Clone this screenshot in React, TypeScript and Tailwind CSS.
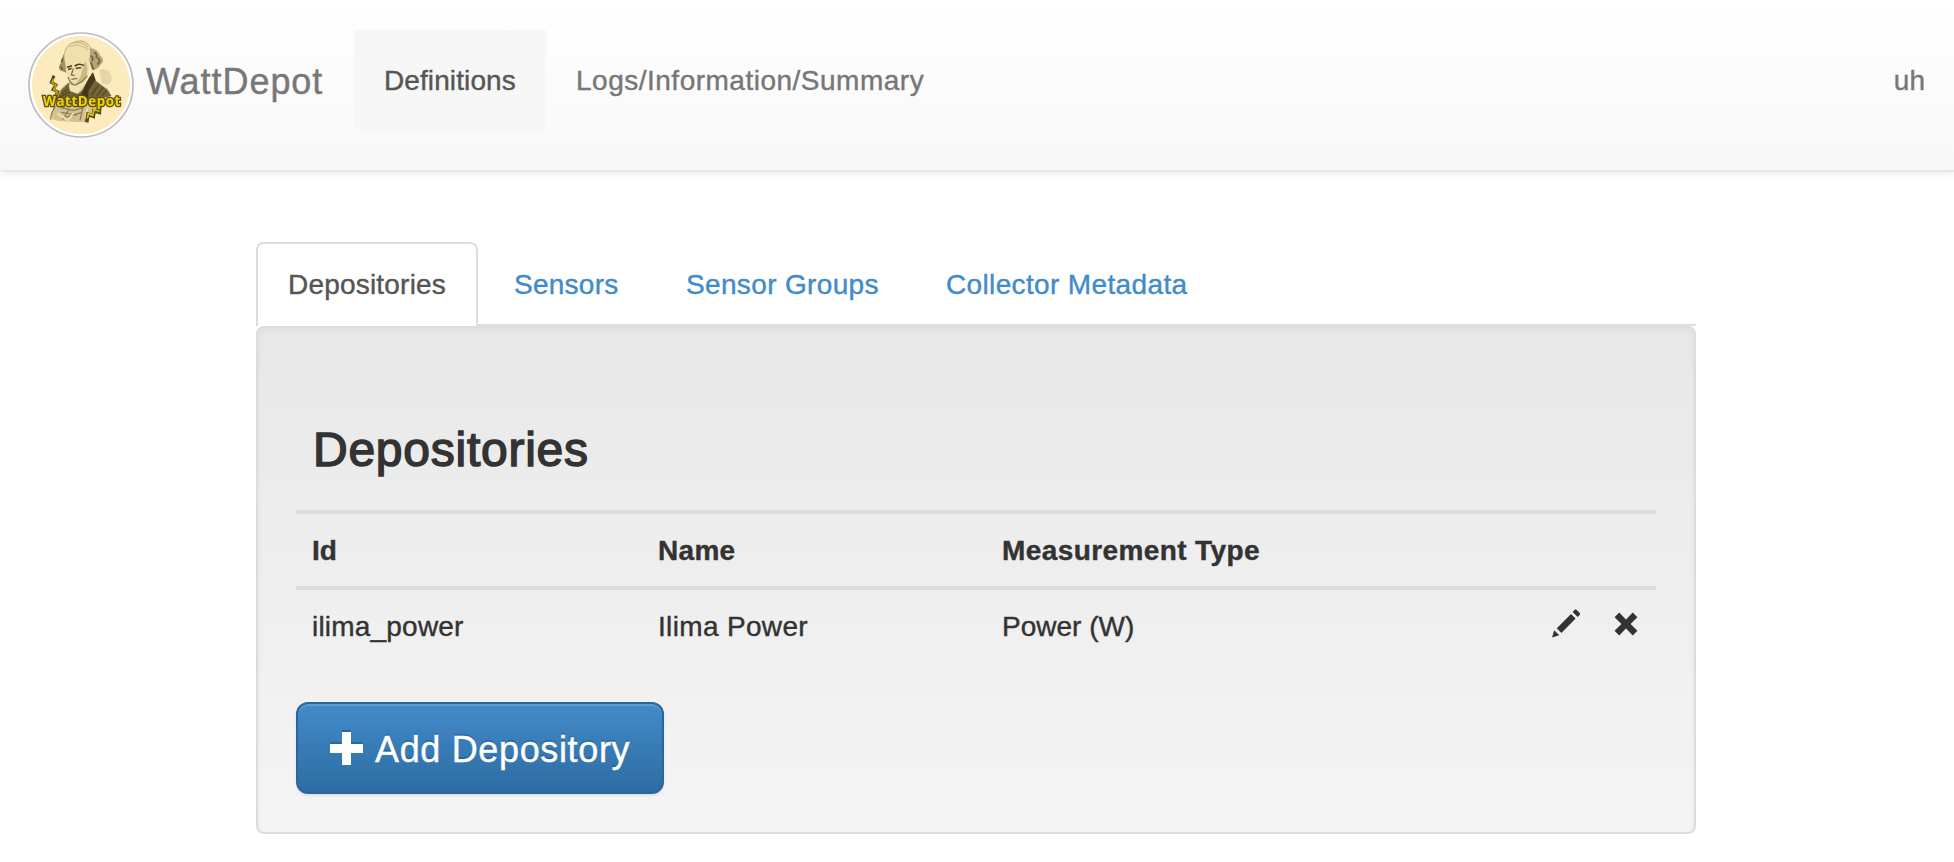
import React from "react";

const tabs = [
  { label: "Sensors", tracking: "w-[168px] tracking-[0.26px]" },
  { label: "Sensor Groups", tracking: "w-[256px] tracking-[0.35px]" },
  { label: "Collector Metadata", tracking: "tracking-[0.36px]" },
];

const headers = [
  { label: "Id", tracking: "" },
  { label: "Name", tracking: "tracking-[0.3px]" },
  { label: "Measurement Type", tracking: "tracking-[0.4px]" },
  { label: "", tracking: "" },
];

function Logo() {
  return (
    <svg viewBox="24 21 318 318" className="size-[106px] shrink-0">
      <defs>
        <filter id="soft" x="-10%" y="-10%" width="120%" height="120%">
          <feGaussianBlur stdDeviation="1.7" />
        </filter>
        <filter id="edge" x="-10%" y="-10%" width="120%" height="120%">
          <feGaussianBlur stdDeviation="1.1" />
        </filter>
      </defs>
      <circle cx="183" cy="180" r="156" fill="#fff" stroke="#bcbcc0" strokeWidth="5" />
      <circle cx="183" cy="180" r="147" fill="#fdebbd" />
      <g filter="url(#soft)">
        <path d="M238 134C258 126 278 144 275 165C271 180 258 182 244 174Z" fill="#e6d6a6" />
        <path d="M146 170L128 186L112 204L104 232L96 262L94 282L118 288L150 290L200 292L226 260L262 224L274 212L264 192L232 172L212 156L190 184L160 184Z" fill="#d2c292" />
        <path d="M146 174L126 192L110 220L170 232L262 216L274 212L262 194L228 168L220 144L206 160L190 194L174 206Z" fill="#75643b" />
        <path d="M206 196L226 164L218 142L200 172L186 200L178 222L204 226Z" fill="#43371a" />
        <path d="M146 178L150 198L172 206L196 176L206 150L190 162L170 184Z" fill="#f2e2b2" />
        <path d="M134 84C124 94 128 108 121 116C114 126 116 136 126 138L140 144C134 120 138 100 134 84Z" fill="#a18f63" />
        <path d="M206 70C220 68 238 78 240 92C252 98 252 112 242 118C238 128 228 134 218 136C210 130 214 120 208 110C200 98 202 84 206 70Z" fill="#b6a478" />
        <path d="M134 84C138 58 160 46 186 48C204 52 212 66 210 88C210 98 206 108 208 118C208 134 206 146 200 156C192 166 182 176 170 180C156 182 148 170 144 156C138 144 140 132 137 118C132 106 132 94 134 84Z" fill="#f1dfae" />
        <path d="M134 84C138 60 160 47 186 48C200 51 210 62 214 72" fill="none" stroke="#b8a678" strokeWidth="3" />
        <path d="M160 54C178 50 194 56 204 68M148 66C166 56 188 60 204 76" fill="none" stroke="#d5c493" strokeWidth="4" />
        <path d="M196 108C203 120 204 134 200 150C192 166 178 178 166 179C176 164 186 150 186 134Z" fill="#cbb987" />
        <path d="M141 127L156 122M164 123C172 117 184 117 192 122" stroke="#4c3f1d" strokeWidth="5" fill="none" />
        <path d="M144 133L155 130M167 130L184 128" stroke="#6a5b33" strokeWidth="5" fill="none" />
        <path d="M160 130L154 150L164 152M154 163L172 160" stroke="#82714a" strokeWidth="4" fill="none" />
        <path d="M144 156Q152 180 166 180L186 170L202 152" stroke="#8a794e" strokeWidth="4" fill="none" />
        <path d="M222 82Q234 88 228 98M232 98Q246 108 232 118M212 92Q222 98 216 108M128 100L124 112M122 124L128 134M212 112L218 126L222 134" stroke="#6b5b34" strokeWidth="4.5" fill="none" />
        <path d="M106 244Q92 264 92 284M122 248L160 256L192 248M124 262L170 270M134 278L186 262M188 250L180 286M148 252L128 284" stroke="#8c7b50" strokeWidth="3.5" fill="none" />
        <path d="M112 266L142 284M160 264L144 288M202 250L196 282" stroke="#f0dfad" strokeWidth="6" fill="none" />
        <path d="M126 206L144 192M120 216L150 200M214 210L236 180M230 212L250 188M246 212L260 196" stroke="#57481f" strokeWidth="4" fill="none" />
      </g>
      <g filter="url(#edge)">
        <path d="M102 152L94 172L108 180L99 194L113 200L106 216L112 226" fill="none" stroke="#5a4c1c" strokeWidth="9" />
        <path d="M100 162L96 173L108 181L101 194L112 200L108 214" fill="none" stroke="#cba700" strokeWidth="4.5" />
        <path d="M239 244L238 262L222 258L220 274L204 268L200 292" fill="none" stroke="#5a4c1c" strokeWidth="11" />
        <path d="M238 242L236 258L222 254L218 271L205 266L202 280" fill="none" stroke="#e6c500" strokeWidth="5" />
        <text
          x="69"
          y="242"
          textLength="232"
          lengthAdjust="spacing"
          className="font-['Open_Sans'] text-[40px] font-bold"
          fill="#f1d500"
          stroke="#5e5018"
          strokeWidth="8"
          paintOrder="stroke"
        >
          WattDepot
        </text>
      </g>
    </svg>
  );
}

function Pencil() {
  return (
    <svg viewBox="0 0 28 29" className="h-[29px] w-7" fill="#333">
      <path d="M0 28.5L2.2 21.2L7.3 26.3ZM4.8 19.3L19 5L23.6 9.6L9.4 23.9ZM20.6 2.9L22.8 .7Q23.6 0 24.4 .7L28 4.3Q28.6 5 27.9 5.7L25.7 7.9Z" />
    </svg>
  );
}

function Remove() {
  return (
    <svg viewBox="0 0 28 28" className="size-7" fill="#333">
      <path d="M7.2 2.6L14 9.4L20.8 2.6L25.4 7.2L18.6 14L25.4 20.8L20.8 25.4L14 18.6L7.2 25.4L2.6 20.8L9.4 14L2.6 7.2Z" />
    </svg>
  );
}

export default function App() {
  return (
    <div className="h-[862px] overflow-hidden bg-white font-['Liberation_Sans',Arial,sans-serif] text-[28px] leading-10 text-[#333] [-webkit-text-stroke:0.4px]">
      <nav className="flex h-[172px] items-start rounded-bl-[3px] border-b-2 border-[#e7e7e7] bg-linear-to-b from-white to-[#f8f8f8] pr-[29px] text-[#777] shadow-[inset_0_2px_0_rgba(255,255,255,0.15),0_2px_10px_rgba(0,0,0,0.075)]">
        <a className="flex w-[354px] shrink-0 items-start pl-7 pt-8 [-webkit-text-stroke:0]">
          <Logo />
          <span className="ml-3 mt-[30px] text-[36px] tracking-[0.95px] [-webkit-text-stroke:0.4px]">WattDepot</span>
        </a>
        <a className="mt-[30px] w-48 px-[30px] pb-[29px] pt-[31px] tracking-[0.1px] bg-[#f7f7f7] text-[#555]">
          Definitions
        </a>
        <a className="mt-[30px] px-[30px] pt-[31px] tracking-[0.5px]">Logs/Information/Summary</a>
        <a className="ml-auto mt-[61px]">uh</a>
      </nav>

      <main className="ml-64 mt-[70px] w-[1440px]">
        <div className="flex h-[84px] gap-1 border-b-2 border-[#ddd]">
          <a className="h-[84px] w-[222px] rounded-t-lg border-2 border-b-0 border-[#ddd] bg-white px-[30px] pt-[21px] tracking-[0.2px] text-[#555]">
            Depositories
          </a>
          {tabs.map((tab) => (
            <a key={tab.label} className={`whitespace-nowrap pl-8 pt-[23px] text-[#428bca] ${tab.tracking}`}>
              {tab.label}
            </a>
          ))}
        </div>

        <section className="h-[508px] rounded-lg border-2 border-[#dcdcdc] bg-linear-to-b from-[#e8e8e8] to-[#f5f5f5] px-[38px] shadow-[inset_0_2px_6px_rgba(0,0,0,0.05),0_2px_0_rgba(255,255,255,0.1)]">
          <h3 className="ml-[17px] pt-[95px] text-[48px] leading-[53px] tracking-[0.75px] [-webkit-text-stroke:1.5px_#333]">
            Depositories
          </h3>
          <table className="mt-[34px] w-full table-fixed border-separate border-spacing-0 text-left">
            <colgroup>
              <col className="w-[346px]" />
              <col className="w-[344px]" />
              <col className="w-[345px]" />
              <col />
            </colgroup>
            <thead>
              <tr>
                {headers.map((h) => (
                  <th
                    key={h.label}
                    className={`h-20 border-y-4 border-[#ddd] px-4 pb-[15px] pt-[17px] font-bold ${h.tracking}`}
                  >
                    {h.label}
                  </th>
                ))}
              </tr>
            </thead>
            <tbody>
              <tr>
                <td className="px-4 pb-[15px] pt-[17px] tracking-[0.2px]">ilima_power</td>
                <td className="px-4 pb-[15px] pt-[17px] tracking-[0.34px]">Ilima Power</td>
                <td className="px-4 pb-[15px] pt-[17px]">Power (W)</td>
                <td className="p-4">
                  <div className="flex h-10 items-start justify-end gap-8 pt-[3px]">
                    <Pencil />
                    <div className="pt-px">
                      <Remove />
                    </div>
                  </div>
                </td>
              </tr>
            </tbody>
          </table>
          <button className="mt-10 flex h-[92px] w-[368px] items-center rounded-xl border-2 border-[#2b669a] bg-linear-to-b from-[#428bca] to-[#2d6ca2] pl-8 text-[36px] text-white shadow-[inset_0_2px_0_rgba(255,255,255,0.15),0_2px_2px_rgba(0,0,0,0.075)] [text-shadow:0_-2px_0_rgba(0,0,0,0.2)]">
            <svg viewBox="0 0 36 36" className="size-9">
              <path d="M12 0H21V12H33V21H21V33H12V21H0V12H12Z" fill="#2b669a" />
              <path d="M12 2H21V14H33V23H21V35H12V23H0V14H12Z" fill="#fff" />
            </svg>
            <span className="ml-[9px] whitespace-nowrap pt-[3px] tracking-[0.65px]">Add Depository</span>
          </button>
        </section>
      </main>
    </div>
  );
}
